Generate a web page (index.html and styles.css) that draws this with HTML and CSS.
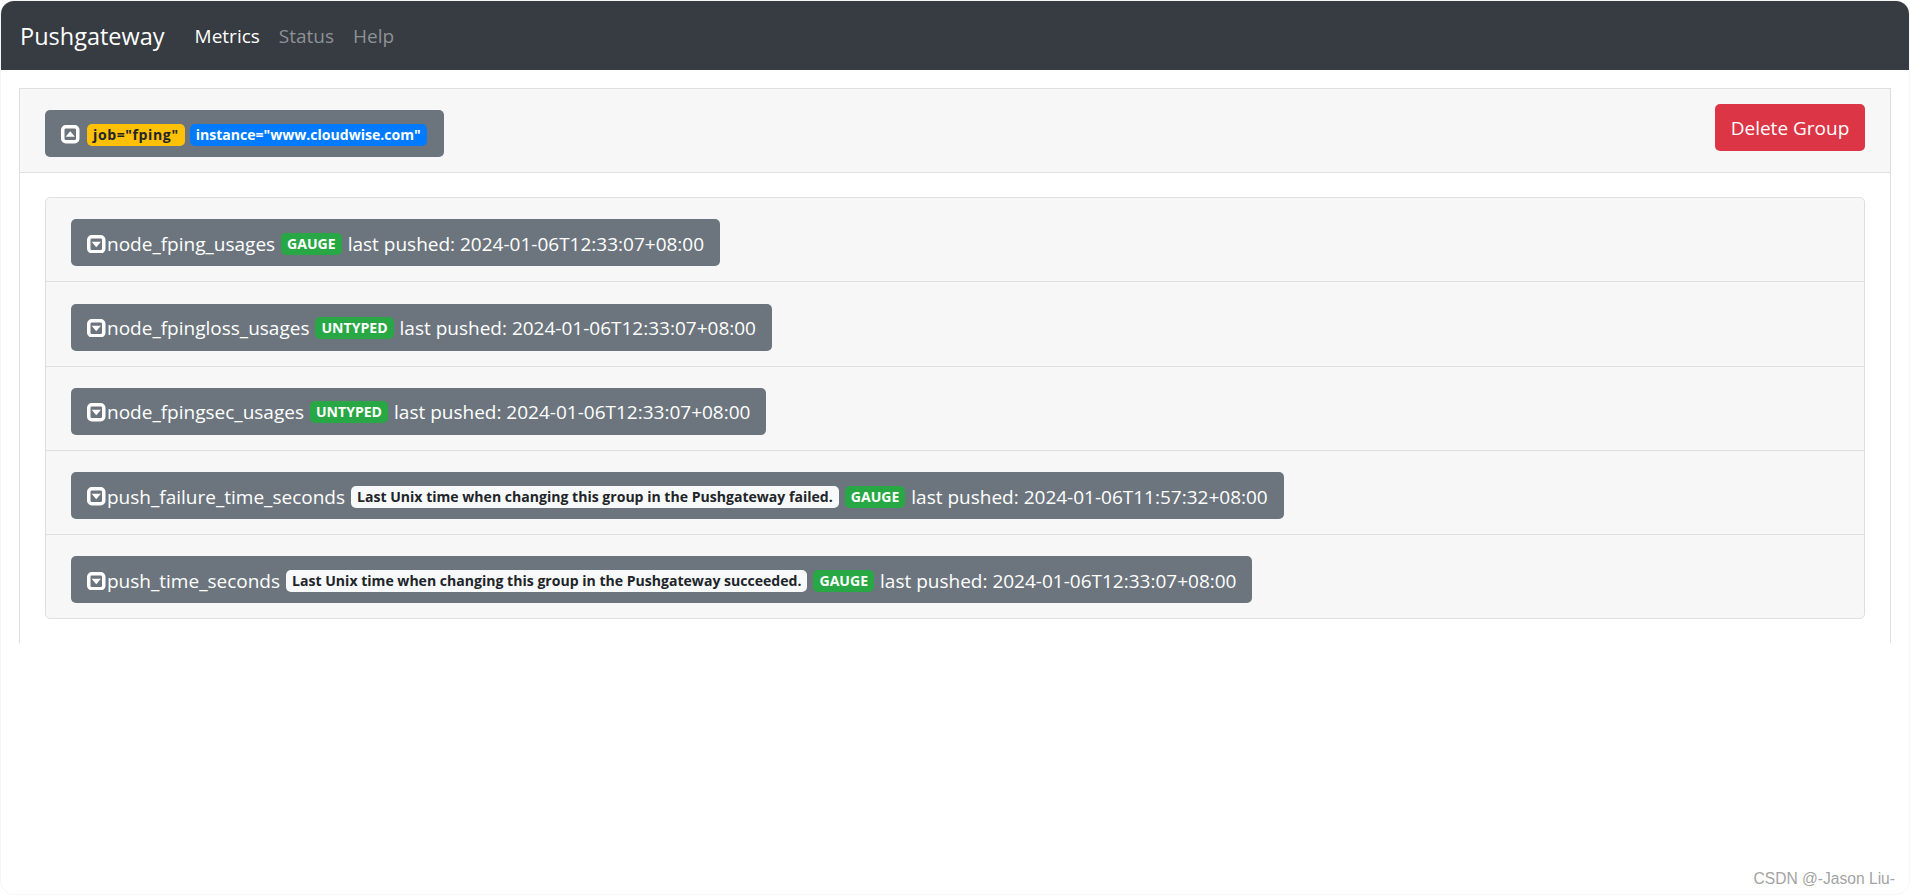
FILE: index.html
```html
<!DOCTYPE html>
<html lang="en">
<head>
  <meta charset="UTF-8" />
  <title>Pushgateway</title>
  <link rel="stylesheet" href="styles.css">
</head>
<body>

  <div class="window">

    <nav class="navbar">
      <a class="brand" href="#">Pushgateway</a>
      <a class="nav-link active" href="#">Metrics</a>
      <a class="nav-link" href="#">Status</a>
      <a class="nav-link" href="#">Help</a>
    </nav>

    <main class="content">
      <div class="group-card">

        <div class="group-header">
          <div class="bar bar-group">
            <svg class="toggle" viewBox="0 0 18 18"><rect x="1.7" y="1.7" width="14.6" height="14.6" rx="3"/><polygon points="9,6 13.5,11.5 4.5,11.5"/></svg>
            <span class="badge badge-warning">job="fping"</span>
            <span class="badge badge-primary">instance="www.cloudwise.com"</span>
          </div>
          <button class="btn-delete">Delete Group</button>
        </div>

        <div class="group-body">
          <div class="metric-list">

            <div class="metric-row">
              <div class="bar">
                <svg class="toggle" viewBox="0 0 18 18"><rect x="1.7" y="1.7" width="14.6" height="14.6" rx="3"/><polygon points="4.5,6.5 13.5,6.5 9,12"/></svg>
                <span class="metric-name">node_fping_usages</span>
                <span class="badge badge-success">GAUGE</span>
                <span class="pushed">last pushed: 2024-01-06T12:33:07+08:00</span>
              </div>
            </div>

            <div class="metric-row">
              <div class="bar">
                <svg class="toggle" viewBox="0 0 18 18"><rect x="1.7" y="1.7" width="14.6" height="14.6" rx="3"/><polygon points="4.5,6.5 13.5,6.5 9,12"/></svg>
                <span class="metric-name">node_fpingloss_usages</span>
                <span class="badge badge-success">UNTYPED</span>
                <span class="pushed">last pushed: 2024-01-06T12:33:07+08:00</span>
              </div>
            </div>

            <div class="metric-row">
              <div class="bar">
                <svg class="toggle" viewBox="0 0 18 18"><rect x="1.7" y="1.7" width="14.6" height="14.6" rx="3"/><polygon points="4.5,6.5 13.5,6.5 9,12"/></svg>
                <span class="metric-name">node_fpingsec_usages</span>
                <span class="badge badge-success">UNTYPED</span>
                <span class="pushed">last pushed: 2024-01-06T12:33:07+08:00</span>
              </div>
            </div>

            <div class="metric-row">
              <div class="bar">
                <svg class="toggle" viewBox="0 0 18 18"><rect x="1.7" y="1.7" width="14.6" height="14.6" rx="3"/><polygon points="4.5,6.5 13.5,6.5 9,12"/></svg>
                <span class="metric-name">push_failure_time_seconds</span>
                <span class="badge badge-light">Last Unix time when changing this group in the Pushgateway failed.</span>
                <span class="badge badge-success">GAUGE</span>
                <span class="pushed">last pushed: 2024-01-06T11:57:32+08:00</span>
              </div>
            </div>

            <div class="metric-row">
              <div class="bar">
                <svg class="toggle" viewBox="0 0 18 18"><rect x="1.7" y="1.7" width="14.6" height="14.6" rx="3"/><polygon points="4.5,6.5 13.5,6.5 9,12"/></svg>
                <span class="metric-name">push_time_seconds</span>
                <span class="badge badge-light">Last Unix time when changing this group in the Pushgateway succeeded.</span>
                <span class="badge badge-success">GAUGE</span>
                <span class="pushed">last pushed: 2024-01-06T12:33:07+08:00</span>
              </div>
            </div>

          </div>
        </div>

      </div>
    </main>

    <div class="watermark">CSDN @-Jason Liu-</div>

  </div>

</body>
</html>
```

FILE: styles.css
```css
:root {
  --gray: #6c757d;
  --line: #dfdfdf;
  --head: #f7f7f7;
}

* {
  box-sizing: border-box;
  margin: 0;
  padding: 0;
}

body {
  font-family: 'Open Sans', 'Noto Sans', sans-serif;
  font-size: 19px;
  background-color: #fff;
  color: #212529;
  overflow: hidden;
}

.window {
  position: relative;
  height: 895px;
  border: 1px solid #f6f6f6;
  border-radius: 14px;
  overflow: hidden;
}

.navbar {
  display: flex;
  align-items: center;
  height: 70px;
  padding: 0 20px;
  background-color: #373b42;
  border-top: 1px solid #4a4e53;
  margin: -1px -1px 0;
}

.brand {
  font-size: 23.5px;
  color: #fff;
  text-decoration: none;
  margin-right: 30px;
}

.nav-link {
  color: #8e9195;
  text-decoration: none;
  margin-right: 19px;
}

.nav-link.active {
  color: #fff;
}

.content {
  padding: 18px 18px 0;
}

.group-card {
  border: 1px solid var(--line);
  border-bottom: none;
  height: 555px;
}

.group-header {
  display: flex;
  justify-content: space-between;
  align-items: flex-start;
  height: 84px;
  padding: 15px 25px 0;
  background-color: var(--head);
  border-bottom: 1px solid var(--line);
}

.group-body {
  padding: 24px 25px 0;
}

.metric-list {
  background-color: var(--head);
  border: 1px solid var(--line);
  border-radius: 5px;
}

.metric-row {
  padding: 21.25px 25px 15px;
  border-bottom: 1px solid var(--line);
}

.metric-row:last-child {
  border-bottom: none;
}

.bar {
  display: inline-flex;
  align-items: center;
  height: 47px;
  padding: 2px 16px 0;
  background-color: var(--gray);
  border-radius: 5px;
  color: #fff;
  vertical-align: top;
}

.bar-group {
  margin-top: 6px;
  padding-right: 17px;
}

.toggle {
  width: 18.5px;
  height: 18.5px;
  flex: none;
  margin-right: 1.5px;
}

.toggle rect {
  fill: none;
  stroke: #fff;
  stroke-width: 3.4;
}

.toggle polygon {
  fill: #fff;
}

.badge {
  display: inline-block;
  height: 22px;
  line-height: 22px;
  padding: 0 6px;
  border-radius: 5px;
  font-size: 14.07px;
  font-weight: 700;
  white-space: nowrap;
  margin-left: 6px;
}

.badge-warning {
  background-color: #ffc107;
  color: #212529;
  letter-spacing: 0.6px;
}

.badge-primary {
  background-color: #007bff;
  color: #fff;
  margin-left: 5px;
}

.badge-success {
  background-color: #28a745;
  color: #fff;
}

.badge-light {
  background-color: #f8f9fa;
  color: #212529;
}

.pushed {
  margin-left: 6px;
  white-space: nowrap;
}

.metric-name {
  white-space: nowrap;
}

.btn-delete {
  width: 150px;
  height: 47px;
  border: none;
  border-radius: 5px;
  background-color: #dc3545;
  color: #fff;
  font-family: inherit;
  font-size: 19px;
}

.watermark {
  position: absolute;
  right: 14px;
  bottom: 6px;
  font-family: 'Liberation Sans', sans-serif;
  font-size: 15.6px;
  color: #a3a3a3;
}
```
